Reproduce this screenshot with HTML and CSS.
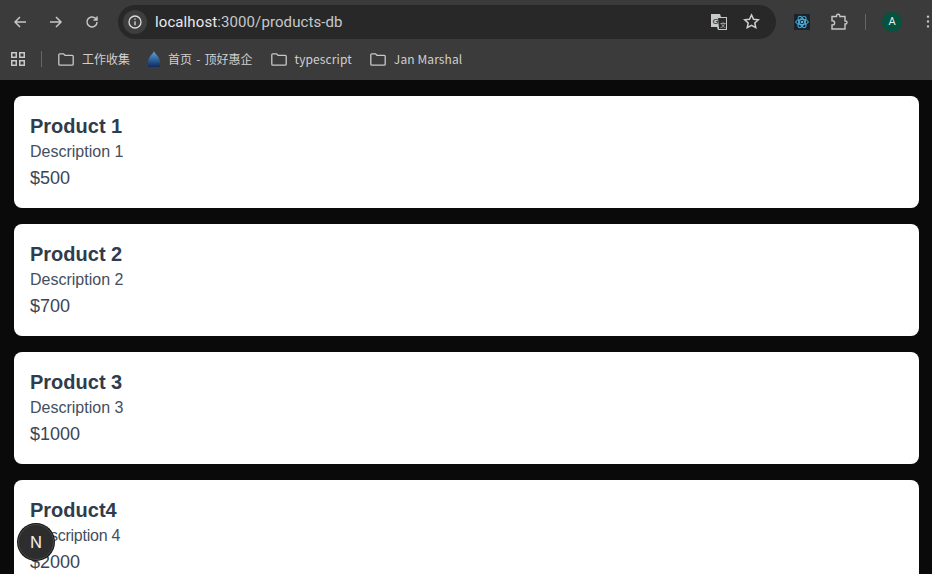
FILE: index.html
```html
<!DOCTYPE html>
<html lang="en">
<head>
<meta charset="utf-8">
<title>Products</title>
<link rel="stylesheet" href="styles.css">
</head>
<body>
<header class="chrome">
  <div class="toolbar">
    <div class="nav">
      <svg class="ico" viewBox="0 0 16 16"><path d="M14 8H3M8 3L3 8l5 5"/></svg>
      <svg class="ico" viewBox="0 0 16 16"><path d="M2 8h11M8 3l5 5-5 5"/></svg>
      <svg class="ico" viewBox="0 0 16 16"><path d="M13 8a5 5 0 1 1-1.500-3.600L13 6M13 2.500V6H9.500"/></svg>
    </div>
    <div class="omnibox">
      <span class="site-info"><svg class="info" viewBox="0 0 16 16"><circle cx="8" cy="8" r="6"/><path d="M8 7.200v4M8 4.400v1.400"/></svg></span>
      <span class="url">localhost<span class="url-path">:3000/products-db</span></span>
      <svg class="translate" viewBox="0 0 18 18"><path class="tr-back" d="M1 1h9l1 3h6v13H8l-1-3H1z"/><path class="tr-front" d="M7.500 4.500h9v12h-8z"/><text class="tr-g" x="2.500" y="11">G</text><text class="tr-k" x="10" y="14">文</text></svg>
      <svg class="star" viewBox="0 0 16 16"><path d="M8 1.800l1.900 4.100 4.500.5-3.300 3 .9 4.400L8 11.600l-4 2.200.9-4.400-3.300-3 4.500-.5z"/></svg>
    </div>
    <div class="actions">
      <span class="react"><svg viewBox="0 0 18 18"><ellipse cx="9" cy="9" rx="7" ry="3"/><ellipse cx="9" cy="9" rx="7" ry="3" transform="rotate(60 9 9)"/><ellipse cx="9" cy="9" rx="7" ry="3" transform="rotate(120 9 9)"/><circle class="react-dot" cx="9" cy="9" r="1.500"/></svg></span>
      <svg class="puzzle" viewBox="0 0 18 18"><path d="M2 3.500h4.500V3a1.700 1.700 0 0 1 3.400 0v.5H15V8h.5a1.500 1.500 0 0 1 0 3H15v5H2v-4h.5a2 2 0 0 0 0-4.200H2z"/></svg>
      <span class="divider"></span>
      <span class="avatar">A</span>
      <svg class="menu" viewBox="0 0 4 16"><circle cx="2" cy="2" r="1.500"/><circle cx="2" cy="8" r="1.500"/><circle cx="2" cy="14" r="1.500"/></svg>
    </div>
  </div>
  <nav class="bookmarks">
    <svg class="apps" viewBox="0 0 14 14"><rect x="0.750" y="0.750" width="4.500" height="4.500"/><rect x="8.750" y="0.750" width="4.500" height="4.500"/><rect x="0.750" y="8.750" width="4.500" height="4.500"/><rect x="8.750" y="8.750" width="4.500" height="4.500"/></svg>
    <span class="divider bm-divider"></span>
    <a class="bm"><svg class="folder" viewBox="0 0 16 13"><path d="M.8 1.800a1 1 0 0 1 1-1h3.700l1.500 1.500h7.200a1 1 0 0 1 1 1v7.900a1 1 0 0 1-1 1H1.800a1 1 0 0 1-1-1z"/></svg>工作收集</a>
    <a class="bm bm-spaced"><svg class="favicon" viewBox="0 0 12 16"><defs><linearGradient id="fav" x1="0" y1="0" x2="0" y2="1"><stop offset="0" stop-color="#6ea6d8"/><stop offset="0.500" stop-color="#2f689f"/><stop offset="1" stop-color="#122a5a"/></linearGradient></defs><path d="M6 0c.8 2.600 2.800 3.600 4.500 6.200C11.600 8 12 10 12 12v4H0v-4c0-2 .4-4 1.500-5.800C3.200 3.600 5.200 2.600 6 0z" fill="url(#fav)"/></svg>首页 - 顶好惠企</a>
    <a class="bm bm-latin"><svg class="folder" viewBox="0 0 16 13"><path d="M.8 1.800a1 1 0 0 1 1-1h3.700l1.500 1.500h7.200a1 1 0 0 1 1 1v7.900a1 1 0 0 1-1 1H1.800a1 1 0 0 1-1-1z"/></svg>typescript</a>
    <a class="bm bm-latin"><svg class="folder" viewBox="0 0 16 13"><path d="M.8 1.800a1 1 0 0 1 1-1h3.700l1.500 1.500h7.200a1 1 0 0 1 1 1v7.900a1 1 0 0 1-1 1H1.800a1 1 0 0 1-1-1z"/></svg>Jan Marshal</a>
  </nav>
</header>
<main class="list">
  <article class="card"><h2 class="name">Product 1</h2><p class="desc">Description 1</p><p class="price">$500</p></article>
  <article class="card"><h2 class="name">Product 2</h2><p class="desc">Description 2</p><p class="price">$700</p></article>
  <article class="card"><h2 class="name">Product 3</h2><p class="desc">Description 3</p><p class="price">$1000</p></article>
  <article class="card"><h2 class="name">Product4</h2><p class="desc desc-tight">Description 4</p><p class="price">$2000</p></article>
</main>
<button class="next-badge"><span>N</span></button>
</body>
</html>
```
FILE: styles.css
```css
html, body { margin: 0; height: 100%; overflow: hidden; }
body { background: #0a0a0a; font-family: "Liberation Sans", Arial, sans-serif; display: flex; flex-direction: column; }
.chrome { background: #3b3b3b; height: 80px; flex: none; display: flex; flex-direction: column; }
.toolbar { height: 44px; flex: none; display: flex; align-items: center; }
.nav { display: flex; align-items: center; gap: 20px; padding-left: 12px; margin-top: -1px; }
.ico { width: 16px; height: 16px; fill: none; stroke: #c4c7c5; stroke-width: 1.500; }
.omnibox { margin-left: 18px; width: 658px; height: 34px; margin-top: -1px; border-radius: 17px; background: #282828; display: flex; align-items: center; padding-left: 5px; box-sizing: border-box; }
.site-info { width: 24px; height: 24px; border-radius: 50%; background: #3e3e3e; display: flex; align-items: center; justify-content: center; }
.info { width: 16px; height: 16px; fill: none; stroke: #dcdcdc; stroke-width: 1.300; }
.url { color: #e8eaed; font: 15px/20px "Roboto", "Liberation Sans", sans-serif; margin-left: 8px; flex: 1; letter-spacing: 0.100px; }
.url-path { color: #c6c9cc; }
.translate { width: 18px; height: 18px; margin-right: 15px; }
.tr-back { fill: #c9c9c9; }
.tr-front { fill: #2c2c2c; stroke: #c9c9c9; stroke-width: 1; }
.tr-g { font: bold 8px "Liberation Sans", sans-serif; fill: #444; }
.tr-k { font: 6px "Noto Sans CJK SC", sans-serif; fill: #c9c9c9; }
.star { width: 17px; height: 17px; margin-right: 16px; fill: none; stroke: #d0d0d0; stroke-width: 1.400; }
.actions { display: flex; align-items: center; margin-left: 18px; margin-top: -1px; }
.react { width: 16px; height: 16px; background: #1a232b; display: flex; }
.react svg { width: 16px; height: 16px; fill: none; stroke: #4fb8e8; stroke-width: 1.100; }
.react-dot { fill: #4fb8e8; stroke: none; }
.puzzle { width: 18px; height: 18px; margin-left: 20px; fill: none; stroke: #c8c8c8; stroke-width: 1.400; }
.divider { display: block; width: 1px; height: 16px; background: #666; }
.actions .divider { margin-left: 17px; }
.avatar { width: 20px; height: 20px; border-radius: 50%; background: #05533f; color: #e6f0ec; font: 11px/20px "Roboto", sans-serif; text-align: center; margin-left: 16px; }
.menu { width: 4px; height: 13px; margin-left: 24px; fill: #c0c0c0; }
.bookmarks { height: 32px; margin-top: -1px; flex: none; display: flex; align-items: center; padding-left: 11px; color: #d0d0d0; font: 12px/16px "Noto Sans CJK SC", "Liberation Sans", sans-serif; }
.apps { width: 14px; height: 14px; fill: none; stroke: #c8c8c8; stroke-width: 1.500; }
.bm-divider { margin-left: 16px; margin-right: 16px; }
.bm { display: flex; align-items: center; gap: 8px; margin-right: 18px; white-space: nowrap; }
.bm-spaced { word-spacing: 1.500px; }
.bm-latin { letter-spacing: 0.100px; }
.folder { width: 16px; height: 13px; fill: none; stroke: #c8c8c8; stroke-width: 1.300; }
.favicon { width: 12px; height: 16px; }
.list { flex: 1; display: flex; flex-direction: column; gap: 16px; padding: 16px 13px 0 14px; overflow: hidden; }
.card { flex: none; background: #fff; border-radius: 8px; padding: 16px; height: 112px; box-sizing: border-box; }
.name { margin: 0; font-size: 20px; line-height: 28px; font-weight: 700; color: #2f3b4e; }
.desc { margin: 0; font-size: 16px; line-height: 24px; color: #434e60; }
.desc-tight { letter-spacing: -0.250px; }
.price { margin: 0; font-size: 18px; line-height: 28px; color: #3a4658; }
.next-badge { position: absolute; left: 18px; top: 524px; width: 36px; height: 36px; border-radius: 50%; background: #2d2d2d; border: 1px solid #4a4a4a; box-shadow: 0 0 0 1px #141414; color: #eee; font: 400 16px/34px "Inter", sans-serif; padding: 0; }
```
